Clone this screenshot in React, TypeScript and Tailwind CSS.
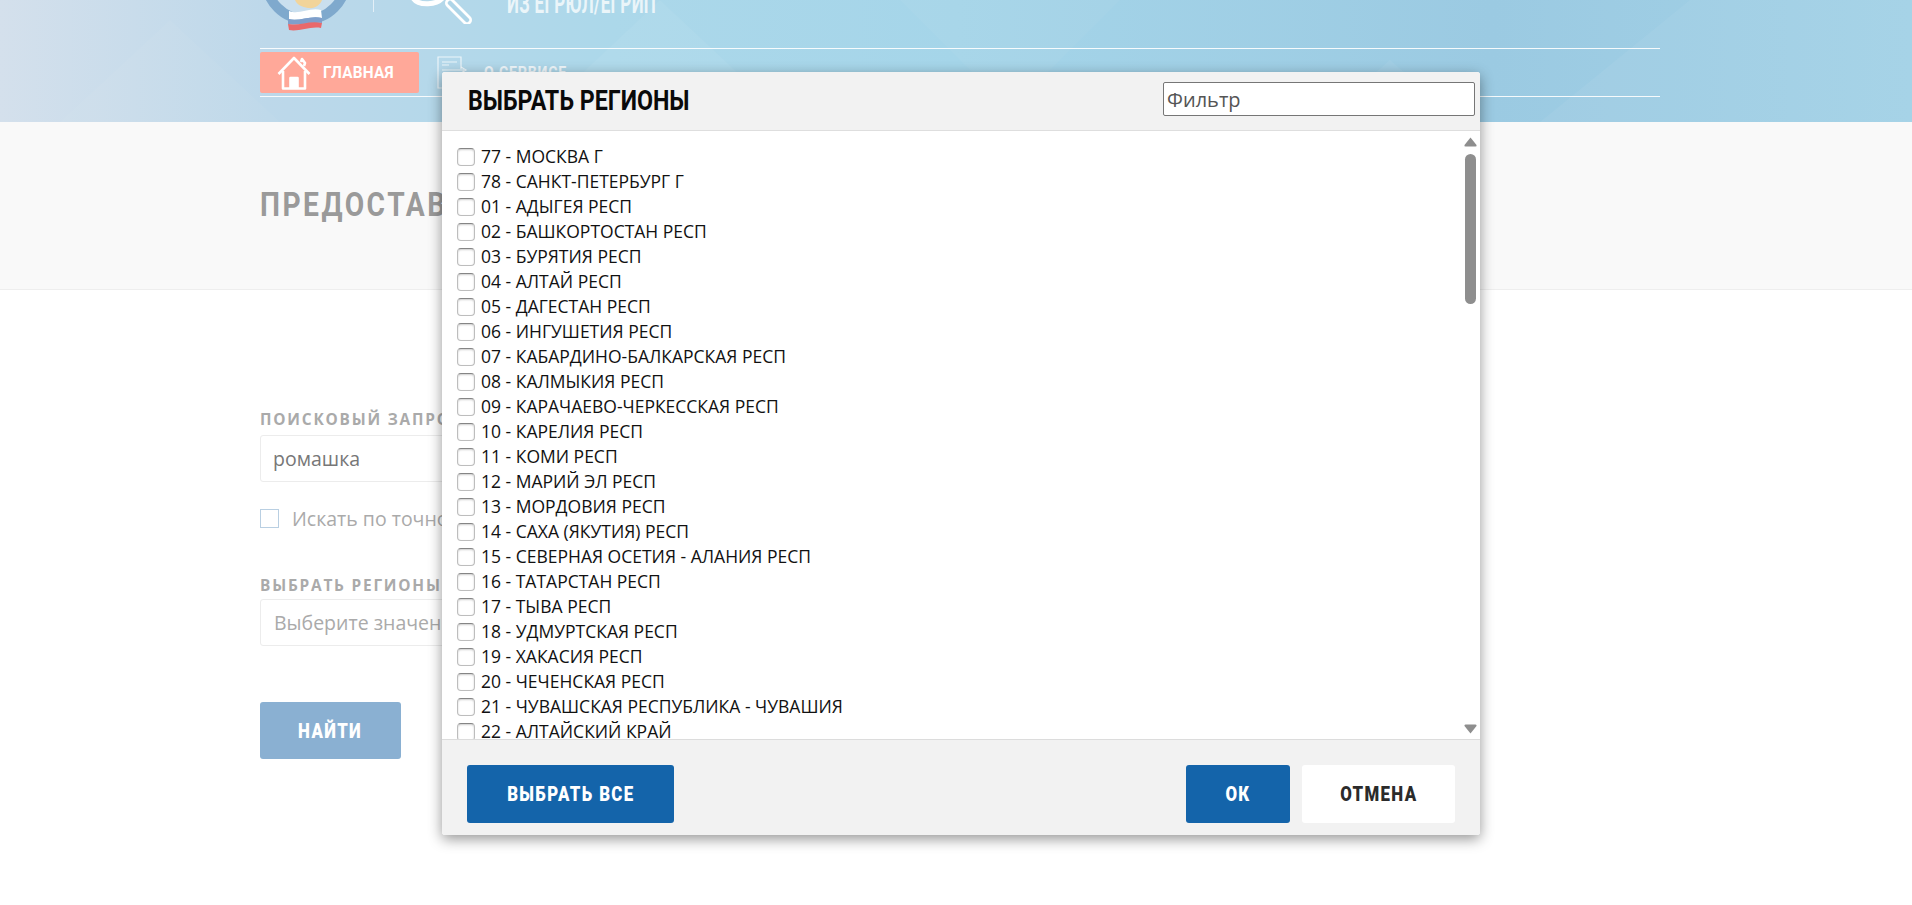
import React from 'react';

const regions = [
  '77 - МОСКВА Г',
  '78 - САНКТ-ПЕТЕРБУРГ Г',
  '01 - АДЫГЕЯ РЕСП',
  '02 - БАШКОРТОСТАН РЕСП',
  '03 - БУРЯТИЯ РЕСП',
  '04 - АЛТАЙ РЕСП',
  '05 - ДАГЕСТАН РЕСП',
  '06 - ИНГУШЕТИЯ РЕСП',
  '07 - КАБАРДИНО-БАЛКАРСКАЯ РЕСП',
  '08 - КАЛМЫКИЯ РЕСП',
  '09 - КАРАЧАЕВО-ЧЕРКЕССКАЯ РЕСП',
  '10 - КАРЕЛИЯ РЕСП',
  '11 - КОМИ РЕСП',
  '12 - МАРИЙ ЭЛ РЕСП',
  '13 - МОРДОВИЯ РЕСП',
  '14 - САХА (ЯКУТИЯ) РЕСП',
  '15 - СЕВЕРНАЯ ОСЕТИЯ - АЛАНИЯ РЕСП',
  '16 - ТАТАРСТАН РЕСП',
  '17 - ТЫВА РЕСП',
  '18 - УДМУРТСКАЯ РЕСП',
  '19 - ХАКАСИЯ РЕСП',
  '20 - ЧЕЧЕНСКАЯ РЕСП',
  '21 - ЧУВАШСКАЯ РЕСПУБЛИКА - ЧУВАШИЯ',
  '22 - АЛТАЙСКИЙ КРАЙ',
];

// the site's condensed face isn't available, Roboto squeezed horizontally is close
const din = "font-['Roboto',sans-serif] font-bold inline-block whitespace-nowrap";
const btnText = "font-['Roboto',sans-serif] font-black inline-block whitespace-nowrap text-[20px] tracking-[1.6px] scale-x-[0.84]";

function Logo() {
  return (
    <svg width="90" height="34" viewBox="0 0 90 34" className="shrink-0">
      <circle cx="46" cy="-20.5" r="40" fill="#cadfee" stroke="#7fa9cd" strokeWidth="9.8" />
      <path d="M35 0 H62 C60 5 55 9 48 8 C42 7 37 5 35 0 Z" fill="#f2d49a" />
      <path d="M29 11 C39 15 50 7 61 10 L62 18 C50 15 39 22 29 19 Z" fill="#ffffff" />
      <path d="M28 19 C39 22 50 15 62 18 L62 23 C50 20 39 26 28 24 Z" fill="#7f9fcb" />
      <path d="M28 24 C39 26 50 20 62 23 L61 28 C50 26 39 32 29 30 Z" fill="#e9696b" />
    </svg>
  );
}

function Magnifier() {
  return (
    <svg width="70" height="24" viewBox="0 0 70 24" className="shrink-0">
      <path d="M3 -2 C8 6 28 6 34 -4" fill="none" stroke="#ffffff" strokeWidth="5" />
      <path d="M40 3 L57 20" stroke="#ffffff" strokeWidth="10" strokeLinecap="round" />
      <path d="M40 3 L57 20" stroke="#aed5e8" strokeWidth="4.5" strokeLinecap="round" />
    </svg>
  );
}

function HomeIcon() {
  return (
    <svg width="34" height="34" viewBox="0 0 34 34" fill="none" stroke="#ffffff" strokeWidth="2.6" strokeLinejoin="round" className="shrink-0">
      <path d="M1.5 18 L17 2 L32.5 18" />
      <path d="M24 6 L25 3 L28 7 L27 10" />
      <path d="M6 15 V32.5 H28 V15" />
      <path d="M13.5 32 V22 H20.5 V32" fill="#ffffff" />
    </svg>
  );
}

function DocIcon() {
  return (
    <svg width="31" height="33" viewBox="0 0 31 33" fill="none" stroke="#ffffff" strokeOpacity="0.75" strokeWidth="1.2" className="shrink-0">
      <path d="M24 13 V1 H1 V32 H24 V20" />
      <path d="M5 6 H20 M5 9 H12 M5 14 H27 M24 11 L29 14 L24 17" />
      <path d="M5 20 H20 M5 24 H20" strokeOpacity="0.5" />
    </svg>
  );
}

function HeaderPattern() {
  return (
    <svg className="absolute inset-0 h-full w-full" viewBox="0 0 1912 122" preserveAspectRatio="none">
      <g fill="#ffffff">
        <polygon points="60,122 170,20 280,122" fillOpacity="0.04" />
        <polygon points="530,122 660,0 790,122" fillOpacity="0.05" />
        <polygon points="900,0 1010,110 1120,0" fillOpacity="0.04" />
        <polygon points="1540,122 1690,0 1912,0 1912,122" fillOpacity="0.05" />
        <polygon points="1320,122 1390,60 1460,122" fillOpacity="0.05" />
      </g>
    </svg>
  );
}

function RegionRow({ name }: { name: string }) {
  return (
    <label className="flex h-[25px] shrink-0 items-center">
      <span className="h-[18px] w-[18px] shrink-0 rounded-[4px] border border-[#bdbdbd] border-t-[#858585] bg-white shadow-[inset_0_1px_2px_rgba(0,0,0,0.2)]" />
      <span className="ml-[6px] whitespace-nowrap text-[17.5px] text-[#111]">{name}</span>
    </label>
  );
}

function RegionsDialog() {
  return (
    <div className="absolute left-[442px] top-[72px] flex h-[763px] w-[1038px] flex-col overflow-hidden rounded-[3px] bg-white font-['Open_Sans',sans-serif] shadow-[0_4px_14px_rgba(0,0,0,0.42)]">
      <div className="flex h-[59px] shrink-0 items-center justify-between border-b border-[#dedede] bg-[#f2f2f2] pl-[26px] pr-[5px]">
        <h2 className={`${din} origin-left scale-x-[0.86] text-[27px] leading-none text-[#0a0a0a]`}>ВЫБРАТЬ РЕГИОНЫ</h2>
        <input
          readOnly
          placeholder="Фильтр"
          className="mb-[4px] h-[34px] w-[312px] rounded-[2px] border border-[#767676] bg-white px-[3px] text-[20px] text-[#555] placeholder:text-[#555]"
        />
      </div>

      <div className="flex min-h-0 flex-1 bg-white">
        <div className="flex min-w-0 flex-1 flex-col overflow-hidden pl-[15px] pt-[13px]">
          {regions.map((name) => (
            <RegionRow key={name} name={name} />
          ))}
        </div>
        <div className="mr-[3px] flex w-[13px] shrink-0 flex-col items-center pt-[6px]">
          <svg width="13" height="10" viewBox="0 0 13 10">
            <path d="M6.5 0.5 L12.5 8 Q13 9.5 11.5 9.5 H1.5 Q0 9.5 0.5 8 Z" fill="#8e8e8e" />
          </svg>
          <div className="mt-[7px] h-[150px] w-[11px] rounded-full bg-[#8e8e8e]" />
          <svg width="13" height="10" viewBox="0 0 13 10" className="mb-[5px] mt-auto">
            <path d="M6.5 9.5 L12.5 2 Q13 0.5 11.5 0.5 H1.5 Q0 0.5 0.5 2 Z" fill="#8e8e8e" />
          </svg>
        </div>
      </div>

      <div className="flex h-[96px] shrink-0 items-start border-t border-[#dcdcdc] bg-[#f2f2f2] px-[25px] pt-[25px]">
        <button className="h-[58px] w-[207px] rounded-[3px] bg-[#1464aa] text-white">
          <span className={btnText}>ВЫБРАТЬ ВСЕ</span>
        </button>
        <button className="ml-auto h-[58px] w-[104px] rounded-[3px] bg-[#1464aa] text-white">
          <span className={btnText}>ОК</span>
        </button>
        <button className="ml-[12px] h-[58px] w-[153px] rounded-[3px] bg-white text-[#2b2b2b]">
          <span className={btnText}>ОТМЕНА</span>
        </button>
      </div>
    </div>
  );
}

export default function App() {
  return (
    <div className="relative h-[905px] overflow-hidden bg-white font-['Open_Sans',sans-serif]">
      <header className="relative h-[122px] bg-[linear-gradient(90deg,#d4e0ec_0%,#bdd8ea_14%,#acd8ea_32%,#a5d5e9_50%,#9bcae2_78%,#a2d1e6_100%)]">
        <HeaderPattern />
        <div className="relative ml-[260px] w-[1400px]">
          <div className="flex h-[48px] items-start overflow-hidden">
            <Logo />
            <div className="ml-[23px] h-[12px] w-px bg-white/60" />
            <div className="ml-[36px]">
              <Magnifier />
            </div>
            <div className={`${din} ml-[27px] mt-[-9px] origin-left scale-x-[0.63] text-[27px] leading-[27px] tracking-[0.5px] text-white/75`}>ИЗ ЕГРЮЛ/ЕГРИП</div>
          </div>
          <nav className="flex h-[49px] items-start border-y border-white/90 pt-[3px]">
            <a className="flex h-[41px] w-[159px] items-center rounded-[2px] bg-[#ffa899] pl-[17px]">
              <HomeIcon />
              <span className={`${din} ml-[12px] origin-left scale-x-[0.9] text-[17px] tracking-[0.3px] text-white`}>ГЛАВНАЯ</span>
            </a>
            <a className="ml-[18px] flex h-[41px] items-center">
              <DocIcon />
              <span className={`${din} ml-[16px] origin-left scale-x-[0.83] text-[17px] tracking-[1px] text-white/80`}>О СЕРВИСЕ</span>
            </a>
          </nav>
        </div>
      </header>

      <section className="flex h-[168px] items-center border-b border-[#eeeeee] bg-[#f9f9f9] pb-[4px] pl-[260px]">
        <h1 className={`${din} origin-left scale-x-[0.83] text-[34px] font-black leading-none tracking-[3px] text-[#9a9a9a]`}>ПРЕДОСТАВЛЕНИЕ СВЕДЕНИЙ</h1>
      </section>

      <main className="ml-[260px] w-[1000px] pt-[120px]">
        <label className="block text-[15.4px] font-bold leading-[19px] tracking-[1.8px] text-[#aaaaaa]">ПОИСКОВЫЙ ЗАПРОС</label>
        <div className="mt-[6px] flex h-[47px] w-[800px] items-center rounded-[3px] border border-[#ececec] px-[12px] text-[19.5px] text-[#777777]">ромашка</div>
        <div className="mt-[27px] flex h-[19px] items-center">
          <span className="h-[19px] w-[19px] border border-[#b9cfe2]" />
          <span className="ml-[13px] text-[19.5px] text-[#aaaaaa]">Искать по точному соответствию</span>
        </div>
        <label className="mt-[48px] block text-[15.4px] font-bold leading-[19px] tracking-[1.8px] text-[#aaaaaa]">ВЫБРАТЬ РЕГИОНЫ</label>
        <div className="mt-[4px] flex h-[47px] w-[800px] items-center rounded-[3px] border border-[#ececec] px-[13px] text-[19.5px] text-[#aaaaaa]">Выберите значение</div>
        <button className="mt-[56px] h-[57px] w-[141px] rounded-[3px] bg-[#8ab0d2] text-white">
          <span className={btnText}>НАЙТИ</span>
        </button>
      </main>

      <RegionsDialog />
    </div>
  );
}
